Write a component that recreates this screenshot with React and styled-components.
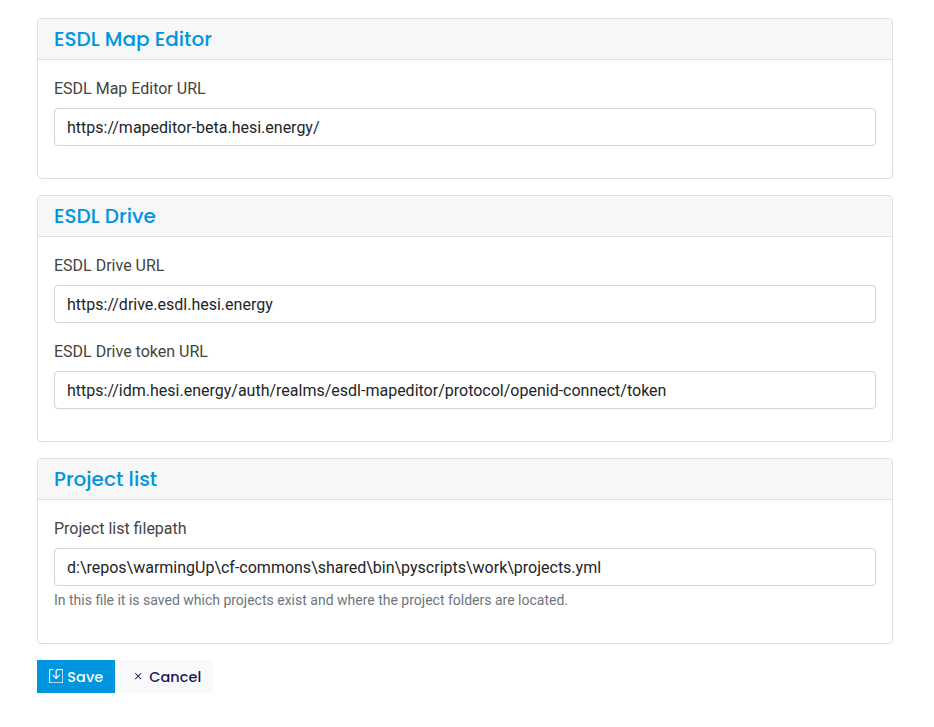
import React from "react";
import styled, { createGlobalStyle } from "styled-components";
import { BsSave, BsX } from "react-icons/bs";

const GlobalStyle = createGlobalStyle`
  *, *::before, *::after { box-sizing: border-box; }
  body {
    margin: 0;
    background: #fff;
    color: #404040;
    font: 400 16px/24px Roboto, sans-serif;
  }
`;

const Form = styled.form`
  display: flex;
  flex-direction: column;
  gap: 16px;
  width: 856px;
  margin: 18px 0 0 37px;
`;

const Card = styled.section`
  background: #fff;
  border: 1px solid #dfdfdf;
  border-radius: 4px;
`;

const CardHeader = styled.header`
  padding: 8px 16px;
  background: #f7f7f7;
  border-bottom: 1px solid #dfdfdf;
  border-radius: 3px 3px 0 0;
`;

const CardTitle = styled.h5`
  margin: 0;
  color: #0095df;
  font: 500 20px/24px Poppins, Inter, sans-serif;
`;

const CardBody = styled.div`
  padding: 17px 16px 16px;
`;

const Field = styled.div`
  display: flex;
  flex-direction: column;
  margin-bottom: 16px;

  & + & {
    padding-top: 1px;
  }
`;

const Label = styled.label`
  margin-bottom: 7px;
  color: #444440;
`;

const Input = styled.input`
  width: 100%;
  height: 38px;
  padding: 6px 12px;
  color: #212529;
  background: #fff;
  border: 1px solid #ced4da;
  border-radius: 4px;
  font: inherit;
  outline: none;
`;

const Hint = styled.small`
  margin-top: 4px;
  color: #6c757d;
  font-size: 14px;
  line-height: 21px;
`;

const Actions = styled.div`
  display: flex;
  gap: 4px;
`;

const Button = styled.button`
  display: flex;
  align-items: center;
  gap: 3.9px;
  width: ${({ $primary }) => ($primary ? "78px" : "94px")};
  height: 33px;
  padding: 1px 0 0 12px;
  border: 0;
  color: ${({ $primary }) => ($primary ? "#fff" : "#1c1656")};
  background: ${({ $primary }) => ($primary ? "#0095df" : "#f8f9fa")};
  font: 500 14.4px/22px Poppins, Inter, sans-serif;
  letter-spacing: 0.1px;
  white-space: nowrap;

  svg {
    flex: none;
    width: 14.4px;
    height: 14.4px;
    margin-top: -2px;
    stroke-width: ${({ $primary }) => ($primary ? 0.35 : 0)};
  }
`;

const sections = [
  {
    title: "ESDL Map Editor",
    fields: [{ id: "map-url", label: "ESDL Map Editor URL", value: "https://mapeditor-beta.hesi.energy/" }],
  },
  {
    title: "ESDL Drive",
    fields: [
      { id: "drive-url", label: "ESDL Drive URL", value: "https://drive.esdl.hesi.energy" },
      {
        id: "token-url",
        label: "ESDL Drive token URL",
        value: "https://idm.hesi.energy/auth/realms/esdl-mapeditor/protocol/openid-connect/token",
      },
    ],
  },
  {
    title: "Project list",
    fields: [
      {
        id: "project-path",
        label: "Project list filepath",
        value: "d:\\repos\\warmingUp\\cf-commons\\shared\\bin\\pyscripts\\work\\projects.yml",
        hint: "In this file it is saved which projects exist and where the project folders are located.",
      },
    ],
  },
];

export default function App() {
  return (
    <>
      <GlobalStyle />
      <Form>
        {sections.map((section) => (
          <Card key={section.title}>
            <CardHeader>
              <CardTitle>{section.title}</CardTitle>
            </CardHeader>
            <CardBody>
              {section.fields.map((field) => (
                <Field key={field.id}>
                  <Label htmlFor={field.id}>{field.label}</Label>
                  <Input id={field.id} defaultValue={field.value} spellCheck={false} />
                  {field.hint && <Hint>{field.hint}</Hint>}
                </Field>
              ))}
            </CardBody>
          </Card>
        ))}
        <Actions>
          <Button type="button" $primary>
            <BsSave />
            Save
          </Button>
          <Button type="button">
            <BsX />
            Cancel
          </Button>
        </Actions>
      </Form>
    </>
  );
}
